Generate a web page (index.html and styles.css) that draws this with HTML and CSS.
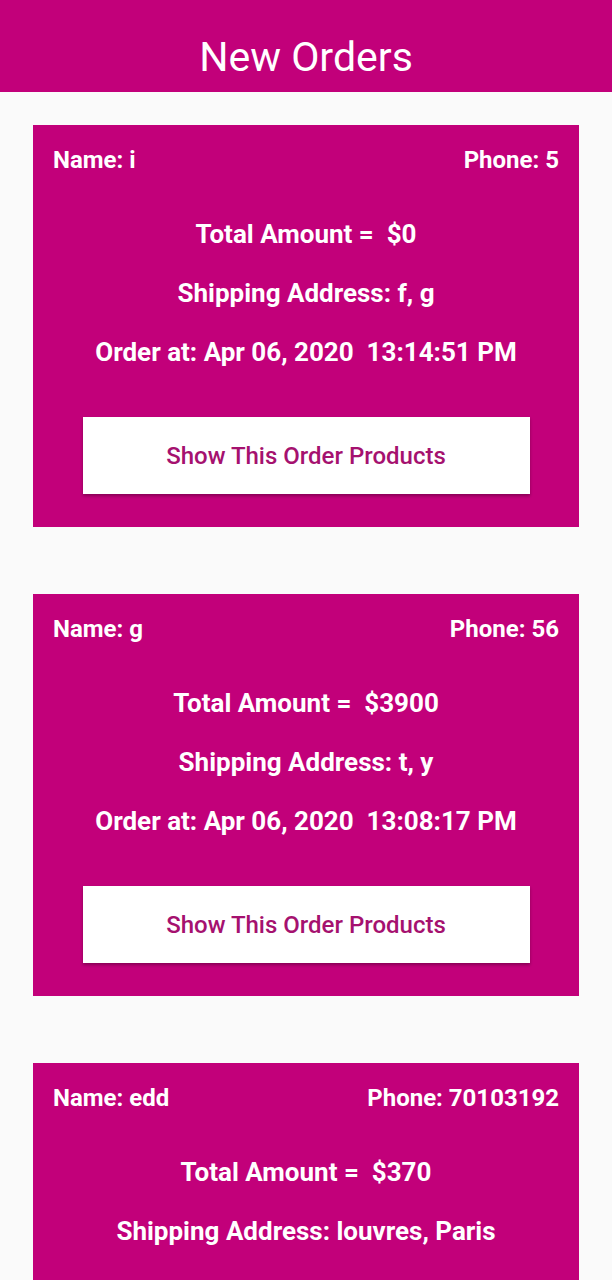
FILE: index.html
```html
<!DOCTYPE html>
<html>
<head>
<meta charset="utf-8">
<link rel="stylesheet" href="styles.css">
</head>
<body>
<header class="appbar"><h1 class="title">New Orders</h1></header>
<main class="list">
  <section class="card">
    <div class="top"><span>Name: i</span><span>Phone: 5</span></div>
    <p class="line">Total Amount =  $0</p>
    <p class="line">Shipping Address: f, g</p>
    <p class="line">Order at: Apr 06, 2020  13:14:51 PM</p>
    <button class="btn">Show This Order Products</button>
  </section>
  <section class="card">
    <div class="top"><span>Name: g</span><span>Phone: 56</span></div>
    <p class="line">Total Amount =  $3900</p>
    <p class="line">Shipping Address: t, y</p>
    <p class="line">Order at: Apr 06, 2020  13:08:17 PM</p>
    <button class="btn">Show This Order Products</button>
  </section>
  <section class="card">
    <div class="top"><span>Name: edd</span><span>Phone: 70103192</span></div>
    <p class="line">Total Amount =  $370</p>
    <p class="line">Shipping Address: louvres, Paris</p>
    <p class="line">Order at: Apr 06, 2020  12:50:03 PM</p>
    <button class="btn">Show This Order Products</button>
  </section>
</main>
</body>
</html>
```
FILE: styles.css
```css
html, body {
  margin: 0;
  padding: 0;
  background: #fafafa;
  font-family: Roboto, "Noto Sans", sans-serif;
}
.appbar {
  height: 92px;
  background: #c2007a;
  display: flex;
  align-items: center;
  justify-content: center;
}
.title {
  margin: 0;
  padding-top: 22px;
  color: #fff;
  font-size: 41px;
  font-weight: 400;
}
.list {
  display: flex;
  flex-direction: column;
  gap: 67px;
  padding: 33px 33px 0;
}
.card {
  background: #c2007a;
  color: #fff;
  padding: 21px 20px 33px;
  display: flex;
  flex-direction: column;
  align-items: center;
  font-weight: 700;
  font-size: 26px;
}
.top {
  align-self: stretch;
  display: flex;
  justify-content: space-between;
  height: 28px;
  line-height: 28px;
  font-size: 24px;
}
.line {
  margin: 0;
  white-space: pre;
  height: 28px;
  line-height: 28px;
  margin-top: 31px;
}
.top + .line { margin-top: 46px; }
.btn {
  margin-top: 51px;
  width: 447px;
  height: 77px;
  border: 0;
  background: #fff;
  color: #a5116f;
  font-family: Roboto, sans-serif;
  font-size: 24px;
  font-weight: 500;
  box-shadow: 0 2px 3px rgba(0,0,0,0.3);
}
```
